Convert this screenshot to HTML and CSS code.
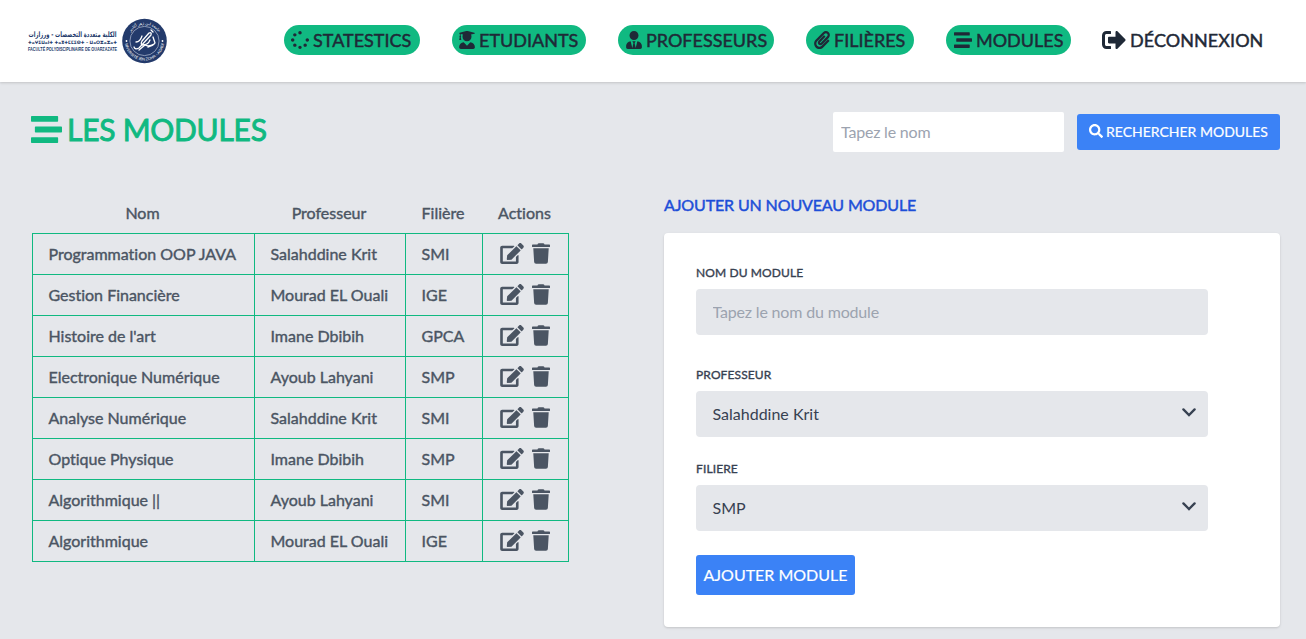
FILE: index.html
```
<!DOCTYPE html>
<html lang="fr">
<head>
<meta charset="utf-8">
<title>Les modules</title>
<link rel="stylesheet" href="styles.css">
</head>
<body>
<svg class="sprite" aria-hidden="true">
  <symbol id="spinner" viewBox="0 0 512 512"><path d="M304 48c0 26.51-21.49 48-48 48s-48-21.49-48-48 21.49-48 48-48 48 21.49 48 48zm-48 368c-26.51 0-48 21.49-48 48s21.49 48 48 48 48-21.49 48-48-21.49-48-48-48zm208-208c-26.51 0-48 21.49-48 48s21.49 48 48 48 48-21.49 48-48-21.49-48-48-48zM96 256c0-26.51-21.49-48-48-48S0 229.49 0 256s21.49 48 48 48 48-21.49 48-48zm12.922 99.078c-26.51 0-48 21.49-48 48s21.49 48 48 48 48-21.49 48-48c0-26.509-21.491-48-48-48zm294.156 0c-26.51 0-48 21.49-48 48s21.49 48 48 48 48-21.49 48-48c0-26.509-21.49-48-48-48zM108.922 60.922c-26.51 0-48 21.49-48 48s21.49 48 48 48 48-21.49 48-48-21.491-48-48-48z"/></symbol>
  <symbol id="graduate" viewBox="0 0 448 512"><path d="M319.4 320.6L224 416l-95.4-95.4C57.1 323.7 0 382.2 0 454.4v9.6c0 26.5 21.5 48 48 48h352c26.5 0 48-21.5 48-48v-9.6c0-72.2-57.1-130.7-128.6-133.8zM13.6 79.8l6.4 1.5v58.4c-7 4.2-12 11.5-12 20.3 0 8.4 4.6 15.4 11.1 19.7L3.5 242c-1.7 6.9 2.1 14 7.6 14h41.8c5.5 0 9.3-7.1 7.6-14l-15.6-62.3C51.4 175.4 56 168.4 56 160c0-8.8-5-16.1-12-20.3V87.1l66 15.9c-8.6 17.2-14 36.4-14 57 0 70.7 57.3 128 128 128s128-57.3 128-128c0-20.6-5.3-39.8-14-57l96.3-23.2c18.2-4.4 18.2-27.1 0-31.5l-190.4-46c-13-3.1-26.7-3.1-39.7 0L13.6 48.2c-18.1 4.4-18.1 27.2 0 31.6z"/></symbol>
  <symbol id="tie" viewBox="0 0 448 512"><path d="M224 256c70.7 0 128-57.3 128-128S294.7 0 224 0 96 57.3 96 128s57.3 128 128 128zm95.8 32.6L272 480l-32-136 32-56h-96l32 56-32 136-47.8-191.4C56.9 292 0 350.3 0 422.4V464c0 26.5 21.5 48 48 48h352c26.5 0 48-21.5 48-48v-41.6c0-72.1-56.9-130.4-128.2-133.8z"/></symbol>
  <symbol id="clip" viewBox="0 0 448 512"><path d="M43.246 466.142c-58.43-60.289-57.341-157.511 1.386-217.581L254.392 34c44.316-45.332 116.351-45.336 160.671 0 43.89 44.894 43.943 117.329 0 162.276L232.214 383.128c-29.855 30.537-78.633 30.111-107.982-.998-28.275-29.97-27.368-77.473 1.452-106.953l143.743-146.835c6.182-6.314 16.312-6.422 22.626-.241l22.861 22.379c6.315 6.182 6.422 16.312.241 22.626L171.427 319.927c-4.932 5.045-5.236 13.428-.648 18.292 4.372 4.634 11.245 4.711 15.688.165l182.849-186.851c19.613-20.062 19.613-52.725-.011-72.798-19.189-19.627-49.957-19.637-69.154 0L90.39 293.295c-34.763 35.56-35.299 93.12-1.191 128.313 34.01 35.093 88.985 35.137 123.058.286l172.06-175.999c6.177-6.319 16.307-6.433 22.626-.256l22.877 22.364c6.319 6.177 6.434 16.307.256 22.626l-172.06 175.998c-59.576 60.938-155.943 60.216-214.77-.485z"/></symbol>
  <symbol id="stream" viewBox="0 0 512 512"><path d="M16 128h416c8.84 0 16-7.16 16-16V48c0-8.84-7.16-16-16-16H16C7.16 32 0 39.16 0 48v64c0 8.84 7.16 16 16 16zm480 80H80c-8.84 0-16 7.16-16 16v64c0 8.84 7.16 16 16 16h416c8.84 0 16-7.16 16-16v-64c0-8.84-7.16-16-16-16zm-64 176H16c-8.84 0-16 7.16-16 16v64c0 8.84 7.16 16 16 16h416c8.84 0 16-7.16 16-16v-64c0-8.84-7.16-16-16-16z"/></symbol>
  <symbol id="signout" viewBox="0 0 512 512"><path d="M497 273L329 441c-15 15-41 4.5-41-17v-96H152c-13.3 0-24-10.7-24-24v-96c0-13.3 10.7-24 24-24h136V88c0-21.4 25.9-32 41-17l168 168c9.3 9.4 9.3 24.6 0 34zM192 436v-40c0-6.6-5.4-12-12-12H96c-17.7 0-32-14.3-32-32V160c0-17.7 14.3-32 32-32h84c6.6 0 12-5.4 12-12V76c0-6.6-5.4-12-12-12H96c-53 0-96 43-96 96v192c0 53 43 96 96 96h84c6.6 0 12-5.4 12-12z"/></symbol>
  <symbol id="edit" viewBox="0 0 576 512"><path d="M402.6 83.2l90.2 90.2c3.8 3.8 3.8 10 0 13.8L274.4 405.6l-92.8 10.3c-12.4 1.4-22.9-9.1-21.5-21.5l10.3-92.8L388.8 83.2c3.8-3.8 10-3.8 13.8 0zm162-22.9l-48.8-48.8c-15.2-15.2-39.9-15.2-55.2 0l-35.4 35.4c-3.8 3.8-3.8 10 0 13.8l90.2 90.2c3.8 3.8 10 3.8 13.8 0l35.4-35.4c15.2-15.3 15.2-40 0-55.2zM384 346.2V448H64V128h229.8c3.2 0 6.2-1.3 8.5-3.5l40-40c7.6-7.6 2.2-20.5-8.5-20.5H48C21.5 64 0 85.5 0 112v352c0 26.5 21.5 48 48 48h352c26.5 0 48-21.5 48-48V306.2c0-10.7-12.9-16-20.5-8.5l-40 40c-2.2 2.3-3.5 5.3-3.5 8.5z"/></symbol>
  <symbol id="trash" viewBox="0 0 448 512"><path d="M432 32H312l-9.4-18.7A24 24 0 0 0 281.1 0H166.8a23.72 23.72 0 0 0-21.4 13.3L136 32H16A16 16 0 0 0 0 48v32a16 16 0 0 0 16 16h416a16 16 0 0 0 16-16V48a16 16 0 0 0-16-16zM53.2 467a48 48 0 0 0 47.9 45h245.8a48 48 0 0 0 47.9-45L416 128H32z"/></symbol>
  <symbol id="search" viewBox="0 0 512 512"><path d="M505 442.7L405.3 343c-4.5-4.5-10.6-7-17-7H372c27.6-35.3 44-79.7 44-128C416 93.1 322.9 0 208 0S0 93.1 0 208s93.1 208 208 208c48.3 0 92.7-16.4 128-44v16.3c0 6.4 2.5 12.5 7 17l99.7 99.7c9.4 9.4 24.6 9.4 33.9 0l28.3-28.3c9.4-9.4 9.4-24.6.1-34zM208 336c-70.7 0-128-57.2-128-128 0-70.7 57.2-128 128-128 70.7 0 128 57.2 128 128 0 70.7-57.2 128-128 128z"/></symbol>
</svg>

<header class="topbar">
  <svg class="logo" viewBox="0 0 144 50" width="144" height="50">
    <g class="logo-text">
      <text class="logo-ar" x="48.5" y="20.5" text-anchor="middle" textLength="88" lengthAdjust="spacingAndGlyphs" direction="rtl">الكلية متعددة التخصصات - ورزازات</text>
      <text class="logo-tif" x="4" y="28" textLength="89" lengthAdjust="spacingAndGlyphs">ⵜⴰⵖⵉⵡⴰⵏⵜ ⵜⴰⴳⵜⵎⵎⵉⵙⵜ – ⵡⴰⵔⵣⴰⵣⴰⵜ</text>
      <text class="logo-fr" x="4" y="35.2" textLength="89" lengthAdjust="spacingAndGlyphs">FACULTÉ POLYDISCIPLINAIRE DE OUARZAZATE</text>
    </g>
    <circle cx="120.5" cy="25" r="22.3" fill="#233a6b"/>
    <circle cx="120.5" cy="25" r="14.6" fill="none" stroke="#b6c0d5" stroke-width=".7"/>
    <path id="arcTop" d="M104 25a16.5 16.5 0 0 1 33 0" fill="none"/>
    <path id="arcBottom" d="M101 27a19.6 19.6 0 0 0 39 0" fill="none"/>
    <text class="seal"><textPath href="#arcTop" startOffset="50%" text-anchor="middle">جامعة ابن زهر أكادير</textPath></text>
    <text class="seal"><textPath href="#arcBottom" startOffset="50%" text-anchor="middle">UNIVERSITÉ IBN ZOHR - AGADIR</textPath></text>
    <circle cx="102.5" cy="25" r=".9" fill="#fff"/><circle cx="138.5" cy="25" r=".9" fill="#fff"/>
    <g fill="none" stroke="#fff" stroke-width="1.3" stroke-linecap="round" stroke-linejoin="round">
      <path d="M110 31q1 3 5 1l12-13q1-3-2-2l-7 8q-2 4 1 4 5 0 7-5"/>
      <path d="M112 26q4 0 6-6M115 34l6-5q4 2 9-1M124 31q5-1 7-4l-2-6M127 14l2 2"/>
    </g>
  </svg>
  <nav class="nav">
    <a class="pill p-stat"><svg class="i-18"><use href="#spinner"/></svg><span>STATESTICS</span></a>
    <a class="pill p-etu"><svg class="i-16"><use href="#graduate"/></svg><span>ETUDIANTS</span></a>
    <a class="pill p-prof"><svg class="i-16"><use href="#tie"/></svg><span>PROFESSEURS</span></a>
    <a class="pill p-fil"><svg class="i-16"><use href="#clip"/></svg><span>FILIÈRES</span></a>
    <a class="pill p-mod"><svg class="i-18"><use href="#stream"/></svg><span>MODULES</span></a>
    <a class="logout"><svg class="i-24"><use href="#signout"/></svg><span>DÉCONNEXION</span></a>
  </nav>
</header>

<main class="page">
  <div class="title-row">
    <h1 class="title"><svg class="i-30"><use href="#stream"/></svg><span>LES MODULES</span></h1>
    <form class="search">
      <input class="search-input" type="text" placeholder="Tapez le nom">
      <button class="search-btn" type="button"><svg class="i-14"><use href="#search"/></svg><span>RECHERCHER MODULES</span></button>
    </form>
  </div>

  <div class="columns">
    <table class="modules">
      <colgroup><col class="c-nom"><col class="c-prof"><col class="c-fil"><col class="c-act"></colgroup>
      <thead><tr><th>Nom</th><th>Professeur</th><th>Filière</th><th>Actions</th></tr></thead>
      <tbody>
        <tr><td>Programmation OOP JAVA</td><td>Salahddine Krit</td><td>SMI</td><td><div class="actions"><svg class="edit"><use href="#edit"/></svg><svg class="trash"><use href="#trash"/></svg></div></td></tr>
        <tr><td>Gestion Financière</td><td>Mourad EL Ouali</td><td>IGE</td><td><div class="actions"><svg class="edit"><use href="#edit"/></svg><svg class="trash"><use href="#trash"/></svg></div></td></tr>
        <tr><td>Histoire de l'art</td><td>Imane Dbibih</td><td>GPCA</td><td><div class="actions"><svg class="edit"><use href="#edit"/></svg><svg class="trash"><use href="#trash"/></svg></div></td></tr>
        <tr><td>Electronique Numérique</td><td>Ayoub Lahyani</td><td>SMP</td><td><div class="actions"><svg class="edit"><use href="#edit"/></svg><svg class="trash"><use href="#trash"/></svg></div></td></tr>
        <tr><td>Analyse Numérique</td><td>Salahddine Krit</td><td>SMI</td><td><div class="actions"><svg class="edit"><use href="#edit"/></svg><svg class="trash"><use href="#trash"/></svg></div></td></tr>
        <tr><td>Optique Physique</td><td>Imane Dbibih</td><td>SMP</td><td><div class="actions"><svg class="edit"><use href="#edit"/></svg><svg class="trash"><use href="#trash"/></svg></div></td></tr>
        <tr><td>Algorithmique ||</td><td>Ayoub Lahyani</td><td>SMI</td><td><div class="actions"><svg class="edit"><use href="#edit"/></svg><svg class="trash"><use href="#trash"/></svg></div></td></tr>
        <tr><td>Algorithmique</td><td>Mourad EL Ouali</td><td>IGE</td><td><div class="actions"><svg class="edit"><use href="#edit"/></svg><svg class="trash"><use href="#trash"/></svg></div></td></tr>
      </tbody>
    </table>

    <section class="add">
      <h2 class="add-title">AJOUTER UN NOUVEAU MODULE</h2>
      <form class="card">
        <label class="label">NOM DU MODULE</label>
        <input class="field field-name" type="text" placeholder="Tapez le nom du module">
        <label class="label">PROFESSEUR</label>
        <div class="field select"><span>Salahddine Krit</span><svg class="chevron" viewBox="0 0 14 9"><path d="M1.4 1.4 7 7l5.6-5.6"/></svg></div>
        <label class="label">FILIERE</label>
        <div class="field select"><span>SMP</span><svg class="chevron" viewBox="0 0 14 9"><path d="M1.4 1.4 7 7l5.6-5.6"/></svg></div>
        <button class="submit" type="button">AJOUTER MODULE</button>
      </form>
    </section>
  </div>
</main>
</body>
</html>
```
FILE: styles.css
```
* { box-sizing: border-box; }
body {
  margin: 0;
  height: 639px;
  overflow: hidden;
  background: #e5e7eb;
  font: 16px/24px Lato, sans-serif;
  color: #4b5563;
}
svg { display: block; flex: none; fill: currentColor; }
.sprite { position: absolute; width: 0; height: 0; }
h1, h2 { margin: 0; font-weight: 400; }
input, button { font-family: inherit; border: 0; outline: 0; }

.topbar {
  display: flex;
  justify-content: space-between;
  height: 82px;
  padding: 16px 42px 0 24px;
  background: #fff;
  box-shadow: 0 1px 3px rgba(0, 0, 0, .1), 0 1px 2px rgba(0, 0, 0, .06);
}
.logo { overflow: visible; }
.logo-text { fill: #233a6b; }
.logo-ar { font: bold 7.5px "DejaVu Sans", sans-serif; }
.logo-tif { font: bold 4.6px "DejaVu Sans", sans-serif; }
.logo-fr { font: bold 4.6px "Liberation Sans", sans-serif; }
.seal { font: 3.9px "Liberation Sans", "DejaVu Sans", sans-serif; fill: #fff; }

.nav { display: flex; align-items: flex-start; gap: 32px; padding-top: 9px; }
.pill, .logout {
  display: flex;
  align-items: center;
  gap: 4px;
  height: 30px;
  color: #1f2937;
  font-size: 18px;
  line-height: 30px;
  white-space: nowrap;
  -webkit-text-stroke: .45px currentColor;
}
.pill { padding-left: 7px; border-radius: 15px; background: #10b981; }
.p-stat { width: 136px; }
.p-etu { width: 134px; }
.p-prof { width: 156px; padding-left: 8px; }
.p-fil { width: 108px; padding-left: 8px; }
.p-mod { width: 125px; padding-left: 8px; }
.logout { width: 162px; margin-left: -1px; letter-spacing: .06px; }
.i-18 { width: 18px; height: 18px; }
.i-16 { width: 16px; height: 18px; }
.i-24 { width: 24px; height: 24px; }
.i-30 { width: 31px; height: 31px; }
.i-14 { width: 14px; height: 14px; }

.page { padding: 30px 26px 0 32px; }
.title-row { display: flex; justify-content: space-between; height: 40px; }
.title {
  display: flex;
  align-items: center;
  gap: 5px;
  height: 35px;
  margin-left: -1px;
  color: #10b981;
  font-size: 30px;
  letter-spacing: -.25px;
  -webkit-text-stroke: .9px currentColor;
}
.title span { padding-bottom: 1px; }
.search { display: flex; align-items: center; gap: 13px; }
.search-input {
  width: 231px;
  height: 40px;
  padding: 0 8px 2px;
  border-radius: 2px;
  background: #fff;
  font-size: 16px;
  letter-spacing: -.2px;
}
input::placeholder { color: #9ca3af; }
.search-btn {
  display: flex;
  align-items: center;
  justify-content: center;
  gap: 3px;
  width: 203px;
  height: 36px;
  padding: 0 0 2px;
  border-radius: 3px;
  background: #3b82f6;
  color: #fff;
  font-size: 14px;
  white-space: nowrap;
  -webkit-text-stroke: .2px currentColor;
}

.columns { display: flex; justify-content: space-between; align-items: flex-start; padding-top: 41px; }
.modules {
  width: 537px;
  border-collapse: collapse;
  table-layout: fixed;
  font-variant-ligatures: none;
  -webkit-text-stroke: .4px currentColor;
}
.c-nom { width: 222px; }
.c-prof { width: 151px; }
.c-fil { width: 77px; }
.c-act { width: 86px; }
.modules th { height: 40px; padding: 0 2px 0 0; font-weight: 400; text-align: center; }
.modules td { height: 41px; padding: 0 15px 0 15.5px; border: 1px solid #10b981; white-space: nowrap; }
.actions { display: flex; gap: 8px; padding: 1px 0 0 1px; }
.edit { width: 24px; height: 21px; }
.trash { width: 18px; height: 21px; }
.actions { padding-bottom: 1px; }

.add { width: 616px; }
.add-title {
  height: 40px;
  font-size: 16px;
  line-height: 24px;
  letter-spacing: -.13px;
  color: #1d4ed8;
  -webkit-text-stroke: .45px currentColor;
}
.card {
  display: flex;
  flex-direction: column;
  align-items: flex-start;
  height: 394px;
  padding: 32px 32px 0;
  border-radius: 4px;
  background: #fff;
  box-shadow: 0 1px 3px rgba(0, 0, 0, .1), 0 1px 2px rgba(0, 0, 0, .06);
}
.label { height: 24px; line-height: 16px; font-size: 12px; letter-spacing: .12px; color: #374151; -webkit-text-stroke: .35px currentColor; }
.field {
  width: 512px;
  height: 46px;
  margin-bottom: 24px;
  padding: 0 16.5px;
  border-radius: 4px;
  background: #e5e7eb;
  color: #374151;
  font-size: 16px;
}
.field-name { margin-bottom: 32px; padding-bottom: 2px; letter-spacing: -.17px; }
.select { display: flex; align-items: center; justify-content: space-between; padding-right: 12.5px; }
.chevron { width: 14px; height: 9px; margin-bottom: 4px; fill: none; stroke: #374151; stroke-width: 2.3; stroke-linecap: round; }
.submit {
  width: 159px;
  height: 40px;
  padding: 0 0 2px;
  border-radius: 3px;
  background: #3b82f6;
  color: #fff;
  font-size: 16px;
  -webkit-text-stroke: .2px currentColor;
}
```
